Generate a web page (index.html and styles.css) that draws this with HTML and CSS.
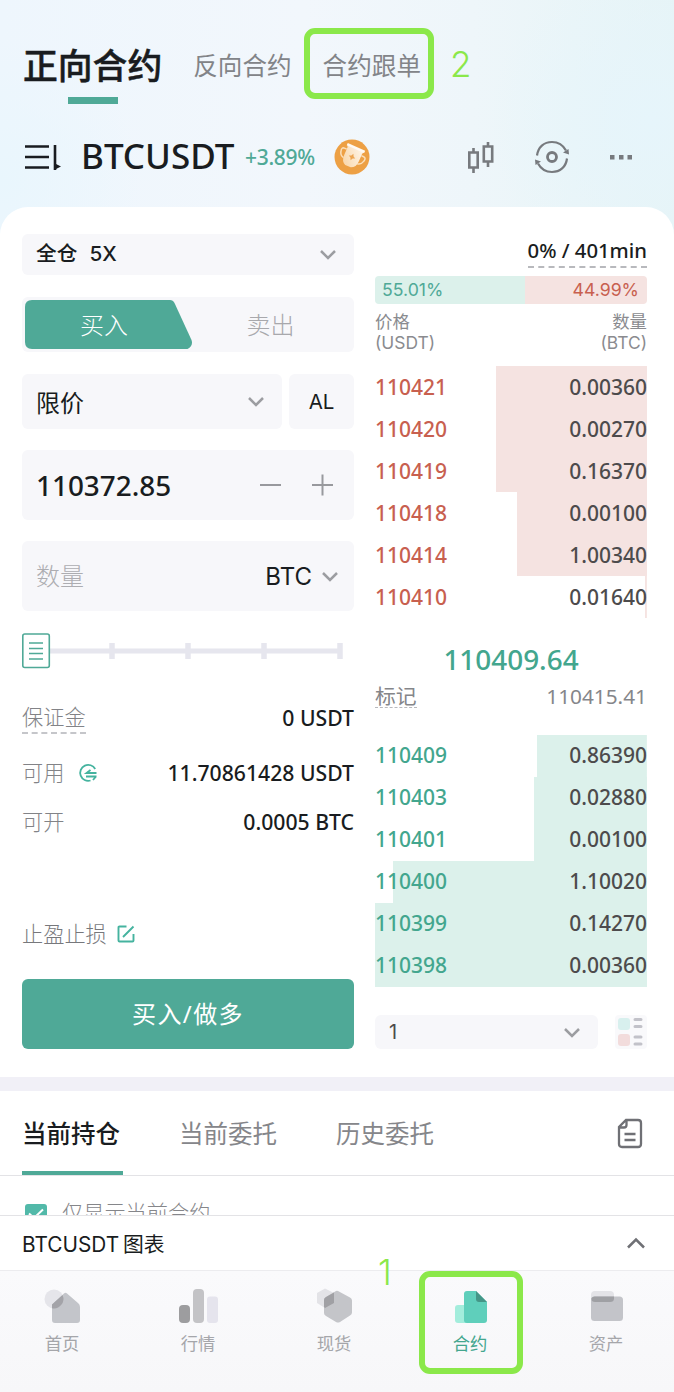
FILE: index.html
```html
<!DOCTYPE html>
<html lang="zh-CN">
<head>
    <meta charset="UTF-8">
    <meta name="viewport" content="width=device-width, initial-scale=1.0">
    <title>BTCUSDT 合约</title>
    <link rel="stylesheet" href="styles.css">
</head>
<body>
    <div class="screen">
        <header>
            <nav class="top-tabs">
                <h1 class="active">正向合约</h1>
                <span>反向合约</span>
                <span class="copy-tab">合约跟单</span>
            </nav>
            <div class="pair-bar">
                <svg class="menu-icon" width="38" height="28" viewBox="0 0 38 28" fill="none" stroke="#191c20" stroke-width="2.600"><path d="M2 3.500h24M2 14h24M2 24.500h24M32 2v25"/><path d="M32 26.500V20.500l6 3z" fill="#191c20" stroke="none"/></svg>
                <strong class="pair">BTCUSDT</strong>
                <span class="change">+3.89%</span>
                <svg class="trophy" width="36" height="36" viewBox="0 0 36 36"><defs><linearGradient id="cup" x1="0" y1="1" x2="1" y2="0"><stop offset="0" stop-color="#f8d3a3"/><stop offset="1" stop-color="#fff6ea"/></linearGradient></defs><circle cx="18" cy="18" r="17.500" fill="#eda044"/><g transform="rotate(24 18 18)"><path d="M10 13H7.500q-3 0-2 4 1 4.500 5 5M26 13h2.500q3 0 2 4-1 4.500-5 5" fill="none" stroke="#fbdfba" stroke-width="1.500"/><path d="M8.500 8h19l-1.500 3v8q0 7-5 9h-6q-5-2-5-9v-8z" fill="url(#cup)"/><path d="M8.500 7h19v2.500h-19z" fill="#fffaf3"/><path d="M18 14.500l1.200 2.300 2.300 1.200-2.300 1.200L18 21.500l-1.200-2.300-2.300-1.200 2.300-1.200z" fill="#eda653"/></g></svg>
                <div class="tools">
                    <svg width="28" height="34" viewBox="0 0 28 34" fill="none" stroke="#777a7e" stroke-width="2.600"><path d="M2.300 12.500h8.400v15H2.300zM6.500 8v5M6.500 27v6M16.800 6.500h8.400v15h-8.400zM21 2v5M21 21v6"/></svg>
                    <svg width="36" height="34" viewBox="0 0 36 34" fill="none" stroke="#777a7e" stroke-width="2.200"><circle cx="18" cy="17" r="4.500" stroke-width="2.800"/><path d="M3 15.500C4 7 10 2 18 2c6 0 11 3 14 8.500M33 18.500C32 27 26 32 18 32c-6 0-11-3-14-8.500"/><path d="M29 12.500l5.500-3.500.5 5.500zM7 21.500L1.500 25 1 19.500z" fill="#777a7e" stroke="none"/></svg>
                    <svg width="24" height="6" viewBox="0 0 24 6" fill="#777a7e"><path d="M1 1h4.500v4.500H1zM10 1h4.500v4.500H10zM18.500 1H23v4.500h-4.500z"/></svg>
                </div>
            </div>
        </header>

        <main>
            <section class="order-form">
                <div class="field margin-mode">
                    <span>全仓&nbsp; 5X</span>
                    <svg class="arrow" width="18" height="11" viewBox="0 0 18 11"><path d="M2 2l7 7 7-7"/></svg>
                </div>
                <div class="side-switch">
                    <div class="buy">
                        <svg class="buy-shape" width="168" height="49" viewBox="0 0 168 49"><path d="M7 0H145q3 0 4.500 3L166.500 40q2 6-4 9H7q-7 0-7-7V7q0-7 7-7z" fill="#4fa997"/></svg>
                        <span>买入</span>
                    </div>
                    <div class="sell">卖出</div>
                </div>
                <div class="type-row">
                    <div class="field order-type">
                        <span>限价</span>
                        <svg class="arrow" width="18" height="11" viewBox="0 0 18 11"><path d="M2 2l7 7 7-7"/></svg>
                    </div>
                    <div class="field al">AL</div>
                </div>
                <div class="field price">
                    <span>110372.85</span>
                    <svg width="74" height="22" viewBox="0 0 74 22" fill="none" stroke="#98999d" stroke-width="2"><path d="M0 11h21M52 11h21M62.500 .5v21"/></svg>
                </div>
                <div class="field amount">
                    <span class="placeholder">数量</span>
                    <span class="unit">BTC</span>
                    <svg class="arrow" width="18" height="11" viewBox="0 0 18 11"><path d="M2 2l7 7 7-7"/></svg>
                </div>
                <svg class="slider" width="332" height="36" viewBox="0 0 332 36"><path d="M28 18h292" stroke="#e6e6ee" stroke-width="5"/><path d="M90 10v16M166 10v16M242 10v16M318 10v16" stroke="#e6e6ee" stroke-width="5.500"/><rect x=".8" y="1" width="26.500" height="33.500" rx="2" fill="#fff" stroke="#4fa997" stroke-width="1.600"/><path d="M7 10h14M7 15.500h14M7 20.500h14M7 26h14" stroke="#4fa997" stroke-width="1.700"/></svg>
                <div class="info margin">
                    <span class="label dashed">保证金</span>
                    <span>0 USDT</span>
                </div>
                <div class="info available">
                    <span class="label">可用</span>
                    <svg width="20" height="20" viewBox="0 0 20 20" fill="none" stroke="#45b39f" stroke-width="1.800"><path d="M17.200 6A8 8 0 1 0 12.500 17.500M18.500 10H8.500l4-3M8 13.500h10.500M18 13.500l-3 3.500"/></svg>
                    <span>11.70861428 USDT</span>
                </div>
                <div class="info max-open">
                    <span class="label">可开</span>
                    <span>0.0005 BTC</span>
                </div>
                <div class="tpsl">
                    <span>止盈止损</span>
                    <svg width="18" height="18" viewBox="0 0 18 18" fill="none" stroke="#45b39f" stroke-width="1.900"><path d="M9.500 1.500H2.500q-1 0-1 1v13q0 1 1 1h13q1 0 1-1V9M6 12L16.500 1.500"/></svg>
                </div>
                <button class="submit">买入/做多</button>
            </section>

            <section class="book">
                <div class="funding"><span>0% / 401min</span></div>
                <div class="ratio">
                    <span class="long" style="width: 55.01%">55.01%</span>
                    <span class="short">44.99%</span>
                </div>
                <div class="book-head">
                    <div><div>价格</div><div>(USDT)</div></div>
                    <div><div>数量</div><div>(BTC)</div></div>
                </div>
                <ul class="asks">
                    <li style="--depth: 55.6%"><b>110421</b><span>0.00360</span></li>
                    <li style="--depth: 55.6%"><b>110420</b><span>0.00270</span></li>
                    <li style="--depth: 55.6%"><b>110419</b><span>0.16370</span></li>
                    <li style="--depth: 47.8%"><b>110418</b><span>0.00100</span></li>
                    <li style="--depth: 47.8%"><b>110414</b><span>1.00340</span></li>
                    <li style="--depth: 0.7%"><b>110410</b><span>0.01640</span></li>
                </ul>
                <div class="last-price">110409.64</div>
                <div class="mark"><span class="mark-label">标记</span><span>110415.41</span></div>
                <ul class="bids">
                    <li style="--depth: 40.4%"><b>110409</b><span>0.86390</span></li>
                    <li style="--depth: 41.7%"><b>110403</b><span>0.02880</span></li>
                    <li style="--depth: 41.7%"><b>110401</b><span>0.00100</span></li>
                    <li style="--depth: 93.4%"><b>110400</b><span>1.10020</span></li>
                    <li style="--depth: 100%"><b>110399</b><span>0.14270</span></li>
                    <li style="--depth: 100%"><b>110398</b><span>0.00360</span></li>
                </ul>
                <div class="book-foot">
                    <div class="field step">
                        <span>1</span>
                        <svg class="arrow" width="18" height="11" viewBox="0 0 18 11"><path d="M2 2l7 7 7-7"/></svg>
                    </div>
                    <svg width="32" height="34" viewBox="0 0 32 34"><rect width="32" height="34" rx="4" fill="#f9f9fb"/><rect x="3" y="3" width="12" height="12" rx="3" fill="#d8f0ee"/><rect x="3" y="19" width="12" height="12" rx="3" fill="#f2dcdc"/><path d="M20 4.500h6M20 11.500h6M20 22h6M20 29h6" stroke="#c2c2c9" stroke-width="3" stroke-linecap="round"/></svg>
                </div>
            </section>
        </main>

        <section class="positions">
            <div class="position-tabs">
                <span class="active">当前持仓</span>
                <span>当前委托</span>
                <span>历史委托</span>
                <svg width="26" height="32" viewBox="0 0 26 32" fill="none" stroke="#6f7075" stroke-width="2.300"><path d="M9 2h12q3 0 3 3v21q0 3-3 3H5q-3 0-3-3V9zM9.500 2.500V7q0 2.500-2.500 2.500H2.500M7.500 16h11M7.500 22h11"/></svg>
            </div>
            <div class="only-current">
                <svg width="22" height="22" viewBox="0 0 22 22"><rect width="22" height="22" rx="3" fill="#52b9a9"/><path d="M4 9.500l5 4.500 9-8.500" fill="none" stroke="#fff" stroke-width="2"/></svg>
                <span>仅显示当前合约</span>
            </div>
        </section>

        <div class="chart-bar">
            <span>BTCUSDT<i>图表</i></span>
            <svg width="18" height="12" viewBox="0 0 18 12" fill="none" stroke="#6f7075" stroke-width="2.500"><path d="M1 10.500l8-8 8 8"/></svg>
        </div>

        <nav class="bottom-nav">
            <a>
                <svg width="40" height="36" viewBox="0 0 40 36"><circle cx="12" cy="11" r="9.500" fill="#e5e5ea"/><path d="M10 16.500L22 5.500q1.500-1.500 3 0L36 15q2 1.500 2 4v13q0 3-3 3H13q-3 0-3-3z" fill="#c3c5ca"/><path d="M10 16.500L20.500 7A9.500 9.500 0 0 1 10 20.300z" fill="#a3a3a8"/></svg>
                <span>首页</span>
            </a>
            <a>
                <svg width="40" height="36" viewBox="0 0 40 36"><rect x="1" y="17" width="11" height="18" rx="4" fill="#9d9d9f"/><rect x="15" y="1" width="11" height="34" rx="4" fill="#c3c3c6"/><rect x="29" y="8.500" width="11" height="26.500" rx="3" fill="#e5e4ed"/></svg>
                <span>行情</span>
            </a>
            <a>
                <svg width="40" height="36" viewBox="0 0 40 36"><path d="M11 .5l9 4.500v10l-9 5-8-5V5z" fill="#e3e3e7"/><path d="M24 3l12 6.500q2 1 2 3v12q0 2-2 3L26 34q-2 1-4 0l-10-6q-2-1-2-3V12q0-2 2-3L22 3q1-.5 2 0z" fill="#c4c5c9"/><path d="M10 12q0-2 2-3l8-4.500V15l-9 5-1-1z" fill="#a0a0a4"/></svg>
                <span>现货</span>
            </a>
            <a class="active">
                <svg width="40" height="36" viewBox="0 0 40 36"><rect x="5" y="17" width="15" height="18" rx="3" fill="#a3eddc"/><path d="M17 3h9l11 11v18q0 3-3 3H17q-3 0-3-3V6q0-3 3-3z" fill="#5fcfbb"/><path d="M26 3l11 11h-8q-3 0-3-3z" fill="#449687"/></svg>
                <span>合约</span>
            </a>
            <a>
                <svg width="40" height="36" viewBox="0 0 40 36"><rect x="5" y="3" width="23" height="14" rx="4" fill="#e3e3e7"/><rect x="5" y="8.500" width="32" height="24.500" rx="3.500" fill="#c3c4c9"/><path d="M5.500 10q1-1.500 3-1.500H28v2q0 3.500-4 3.500H9q-3.500 0-3.500-3z" fill="#9fa0a4"/></svg>
                <span>资产</span>
            </a>
        </nav>

        <!-- step guides -->
        <div class="guide-box guide-box-2"></div>
        <span class="guide-num guide-num-2">2</span>
        <div class="guide-box guide-box-1"></div>
        <span class="guide-num guide-num-1">1</span>
    </div>
</body>
</html>
```
FILE: styles.css
```css
* {
    box-sizing: border-box;
}
body {
    margin: 0;
    font-family: "Noto Sans", "Noto Sans CJK SC", sans-serif;
    color: #191c20;
    background: #fff;
}
ul {
    list-style: none;
    margin: 0;
    padding: 0;
}
svg {
    display: block;
    flex-shrink: 0;
}
.screen {
    position: relative;
    width: 674px;
    height: 1392px;
    overflow: hidden;
    display: flex;
    flex-direction: column;
}

/* header */
header {
    height: 235px;
    flex-shrink: 0;
    padding-top: 41px;
    background: radial-gradient(circle at 650px 120px, #e6f5fb 0, rgba(230, 245, 251, 0) 160px), radial-gradient(circle at 0 180px, #e9f6fd 0, rgba(233, 246, 253, 0) 140px), linear-gradient(90deg, #eef6fd 0, #f2f7fc 45%, #eef6fa 70%, #e6f4f6 100%);
}
.top-tabs {
    display: flex;
    height: 63px;
    padding-left: 23px;
    line-height: 50px;
    font-size: 24.6px;
    color: #828488;
}
.top-tabs h1 {
    margin: 0 31px 0 0;
    font-size: 34.8px;
    font-weight: 500;
    line-height: 50px;
    color: #191c20;
    -webkit-text-stroke: 0.5px #191c20;
}
.top-tabs h1::after {
    content: "";
    display: block;
    width: 50px;
    height: 7px;
    margin: 6px 0 0 45px;
    background: #4fa997;
}
.copy-tab {
    margin-left: 31px;
}
.pair-bar {
    display: flex;
    align-items: center;
    height: 36px;
    margin-top: 35px;
    padding: 0 41px 0 23px;
}
.pair {
    width: 165px;
    padding-left: 20px;
    margin-right: 19px;
    font-size: 35px;
    font-weight: 500;
    line-height: 34px;
    padding-bottom: 2px;
}
.change {
    width: 72px;
    font-size: 21px;
    font-weight: 500;
    color: #4fa997;
    letter-spacing: -0.3px;
}
.trophy {
    margin-left: 17px;
}
.tools {
    display: flex;
    align-items: center;
    gap: 39px;
    margin-left: auto;
}

/* trading panel */
main {
    display: flex;
    gap: 21px;
    height: 870px;
    flex-shrink: 0;
    margin-top: -28px;
    padding: 27px 27px 0 22px;
    background: #fff;
    border-radius: 28px 28px 0 0;
}
.order-form {
    width: 332px;
}
.field {
    display: flex;
    align-items: center;
    justify-content: space-between;
    padding: 0 17px 0 14px;
    background: #f7f7fa;
    border-radius: 6px;
}
.arrow {
    fill: none;
    stroke: #9c9da1;
    stroke-width: 2.5;
}
.margin-mode {
    height: 41px;
    font-family: Inter, "Noto Sans CJK SC", sans-serif;
    font-size: 20.7px;
    font-weight: 500;
    line-height: 38px;
}
.margin-mode span {
    padding-bottom: 2px;
    word-spacing: 0.5px;
}
.side-switch {
    display: flex;
    height: 55px;
    margin-top: 22px;
    padding: 3px;
    background: #f7f7fa;
    border-radius: 6px;
    font-size: 24px;
    font-weight: 300;
    line-height: 49px;
    text-align: center;
}
.buy {
    display: grid;
    width: 168px;
    color: #fff;
}
.buy > * {
    grid-area: 1 / 1;
}
.buy span {
    z-index: 1;
    padding-right: 10px;
}
.sell {
    flex: 1;
    padding-right: 3px;
    color: #a8a8ac;
}
.type-row {
    display: flex;
    gap: 7px;
    height: 55px;
    margin-top: 22px;
}
.order-type {
    flex: 1;
    font-size: 24px;
}
.order-type span {
    padding-bottom: 1px;
}
.al {
    width: 65px;
    padding: 0;
    justify-content: center;
    font-family: Inter, sans-serif;
    font-size: 20.5px;
}
.price {
    height: 70px;
    margin-top: 21px;
    font-size: 27.9px;
    font-weight: 500;
    padding-right: 20px;
}
.amount {
    height: 70px;
    margin-top: 21px;
    font-family: Inter, "Noto Sans CJK SC", sans-serif;
    font-size: 24px;
    padding-right: 15px;
}
.placeholder {
    flex: 1;
    padding-bottom: 3px;
    color: #adadb1;
    font-weight: 300;
}
.unit {
    margin-right: 9px;
}
.slider {
    margin-top: 22px;
}
.info {
    display: flex;
    align-items: center;
    height: 30px;
    font-size: 21.2px;
    font-weight: 500;
    line-height: 30px;
}
.info span:last-child {
    margin-left: auto;
}
.label {
    color: #828387;
    font-weight: 300;
}
.margin {
    margin-top: 34px;
}
.available {
    margin-top: 25px;
}
.available svg {
    margin-left: 14px;
}
.max-open {
    margin-top: 19px;
}
.dashed {
    height: 32px;
    line-height: 30px;
    border-bottom: 2px dashed #c5c6ca;
}
.tpsl {
    display: flex;
    align-items: center;
    gap: 10px;
    height: 30px;
    margin-top: 82px;
    font-size: 21.2px;
    font-weight: 300;
    color: #77787c;
}
.tpsl span {
    padding-bottom: 3px;
}
.submit {
    display: block;
    width: 332px;
    height: 70px;
    margin-top: 30px;
    padding: 0 0 3px;
    border: none;
    border-radius: 6px;
    background: #4fa997;
    color: #fff;
    font: inherit;
    font-size: 24px;
    letter-spacing: 1.4px;
}

/* order book */
.book {
    width: 272px;
}
.funding {
    display: flex;
    justify-content: flex-end;
    height: 42px;
}
.funding span {
    height: 34px;
    line-height: 33px;
    font-size: 20.3px;
    font-weight: 500;
    border-bottom: 2px dashed #b8b9bd;
}
.ratio {
    display: flex;
    height: 28px;
    border-radius: 4px;
    overflow: hidden;
    font-family: Inter, sans-serif;
    font-size: 17.7px;
    line-height: 28px;
}
.long {
    padding-left: 7px;
    background: #dcf1eb;
    color: #4fa997;
}
.short {
    flex: 1;
    padding-right: 8px;
    text-align: right;
    background: #f5e3e1;
    color: #c8604f;
}
.book-head {
    display: flex;
    justify-content: space-between;
    height: 62px;
    padding-top: 7px;
    font-family: Inter, "Noto Sans CJK SC", sans-serif;
    font-size: 17.4px;
    line-height: 21px;
    color: #8a8b8f;
}
.book-head > div:last-child {
    text-align: right;
}
.book li {
    display: flex;
    justify-content: space-between;
    height: 42px;
    font-size: 21px;
    font-weight: 500;
    line-height: 42px;
    color: #4d4b4c;
}
.book .bids li {
    line-height: 41px;
}
.book b {
    font-weight: 500;
}
.asks li {
    background: linear-gradient(#f5e3e1, #f5e3e1) right / var(--depth) 100% no-repeat;
}
.asks b {
    color: #c8604f;
}
.bids li {
    background: linear-gradient(#dcf1eb, #dcf1eb) right / var(--depth) 100% no-repeat;
}
.bids b {
    color: #43a68e;
}
.last-price {
    margin-top: 21px;
    height: 41px;
    line-height: 40px;
    font-size: 27.9px;
    font-weight: 500;
    text-align: center;
    color: #43a68e;
}
.mark {
    display: flex;
    justify-content: space-between;
    height: 55px;
    line-height: 32px;
    font-size: 20.8px;
    color: #85868a;
}
.mark-label {
    height: 28px;
    border-bottom: 1px dashed #b8b9bd;
}
.book-foot {
    display: flex;
    justify-content: space-between;
    margin-top: 28px;
}
.step {
    width: 223px;
    height: 34px;
    font-family: Inter, sans-serif;
    font-size: 20px;
    color: #4d4b4c;
}

/* positions */
.positions {
    height: 138px;
    flex-shrink: 0;
    border-top: 14px solid #f1f0f7;
    overflow: hidden;
}
.position-tabs {
    display: flex;
    height: 85px;
    padding: 0 31px 0 22px;
    border-bottom: 1px solid #e3e3e6;
    font-size: 24.5px;
    line-height: 86px;
    color: #85868a;
}
.position-tabs span {
    width: 101px;
    margin-right: 56px;
    white-space: nowrap;
}
.position-tabs .active {
    color: #191c20;
    font-weight: 500;
    border-bottom: 4px solid #4fa997;
}
.position-tabs svg {
    margin: 27px 0 0 auto;
}
.only-current {
    display: flex;
    gap: 15px;
    padding: 28px 0 0 25px;
    font-size: 21.2px;
    line-height: 18px;
    color: #85868a;
    font-weight: 300;
}
.chart-bar {
    display: flex;
    align-items: center;
    justify-content: space-between;
    height: 55px;
    flex-shrink: 0;
    padding: 0 29px 0 22px;
    border-top: 1px solid #e3e3e6;
    font-family: Inter, "Noto Sans CJK SC", sans-serif;
    font-size: 20.8px;
}
.chart-bar i {
    font-style: normal;
    margin-left: 4px;
}

/* bottom navigation */
.bottom-nav {
    display: flex;
    justify-content: space-between;
    flex: 1;
    padding: 17px 42px 0 36px;
    border-top: 1px solid #ececef;
    background: linear-gradient(#fafafc, #f7f7f9);
}
.bottom-nav a {
    display: flex;
    flex-direction: column;
    align-items: center;
    width: 52px;
    font-size: 17.3px;
    line-height: 26px;
    color: #a5a6aa;
}
.bottom-nav span {
    margin-top: 7px;
}
.bottom-nav .active {
    color: #43a68e;
}

/* guides drawn over the page */
.guide-box {
    position: absolute;
    border: 6px solid #8be84a;
    border-radius: 11px;
}
.guide-box-2 {
    left: 304px;
    top: 28px;
    width: 130px;
    height: 71px;
}
.guide-box-1 {
    left: 419px;
    top: 1271px;
    width: 104px;
    height: 103px;
}
.guide-num {
    position: absolute;
    font-family: Inter, sans-serif;
    font-size: 35px;
    font-weight: 300;
    line-height: 40px;
    color: #8be84a;
}
.guide-num-2 {
    left: 450px;
    top: 44px;
}
.guide-num-1 {
    left: 378px;
    top: 1252px;
}
```
